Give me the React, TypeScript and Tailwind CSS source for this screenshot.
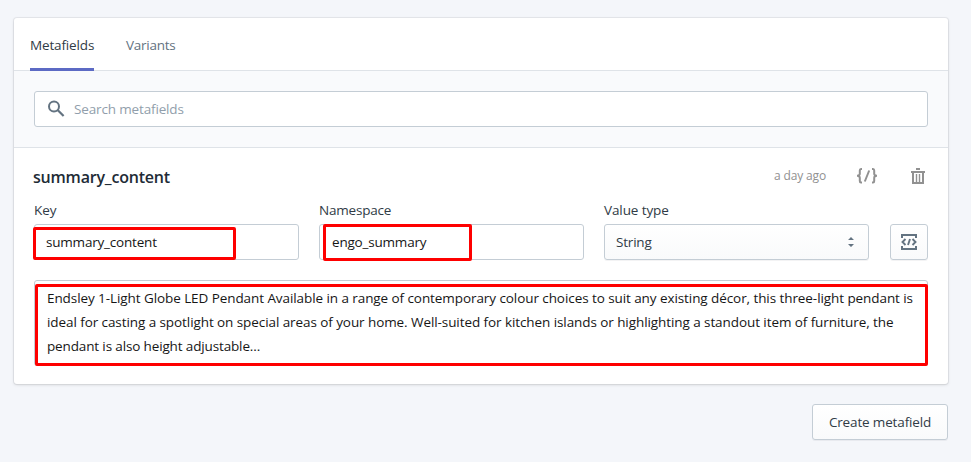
import React from "react";

const Mark = ({ className }: { className: string }) => (
  <div className={`pointer-events-none absolute rounded-[2px] border-[3px] border-[#fe0000] ${className}`} />
);

const inputBox = "h-9 rounded-[3px] border border-[#c4cdd5] bg-white";

export default function App() {
  return (
    <div className="h-[462px] w-[971px] overflow-hidden bg-[#f4f6fa] pl-[14px] pr-[23px] pt-[18px] font-['Open_Sans','Noto_Sans',sans-serif] text-[13.5px] leading-5 text-[#303b46]">
      <main className="h-[366px] rounded-[3px] bg-white shadow-[0_0_0_1px_rgba(63,63,68,0.07),0_1px_3px_0_rgba(63,63,68,0.17)]">
        <nav className="flex h-[53px] border-b border-[#dfe3e8] pl-4 leading-[54px]">
          <a className="h-[53px] w-16 whitespace-nowrap border-b-[3px] border-[#5c6ac4] tracking-[-0.15px]">Metafields</a>
          <a className="ml-8 whitespace-nowrap tracking-[-0.25px] text-[#637381]">Variants</a>
        </nav>
        <div className="h-[77px] border-b border-[#dfe3e8] bg-[#f9fafc] px-5 pt-5">
          <div className={`${inputBox} flex items-center pl-3`}>
            <svg className="h-5 w-5" viewBox="0 0 20 20" fill="none" stroke="#637381" strokeWidth="2">
              <circle cx="7" cy="7.4" r="5" />
              <path d="M10.6 11l6 6" strokeWidth="2.2" />
            </svg>
            <span className="ml-[7px] tracking-[-0.15px] text-[#919eab]">Search metafields</span>
          </div>
        </div>
        <section className="px-5">
          <header className="flex h-[56px] items-center">
            <h2 className="-ml-px flex-1 pt-px text-[16px] font-semibold tracking-[-0.2px] text-[#212b36]">summary_content</h2>
            <span className="mr-[30px] text-[12px] tracking-[-0.15px] text-[#919191]">a day ago</span>
            <svg className="mr-[33px] h-[18px] w-[22px]" viewBox="0 0 22 18" fill="none" stroke="#919191" strokeWidth="2">
              <path d="M6 2H5Q3.8 2 3.8 3.5V6.7Q3.8 8.8 1 8.8Q3.8 8.8 3.8 10.9V14.1Q3.8 15.6 5 15.6H6M16 2H17Q18.2 2 18.2 3.5V6.7Q18.2 8.8 21 8.8Q18.2 8.8 18.2 10.9V14.1Q18.2 15.6 17 15.6H16M13.2 3.5L8.8 14.5" />
            </svg>
            <svg className="mr-[3px] h-[18px] w-[14px]" viewBox="0 0 14 18" fill="none" stroke="#919191">
              <path d="M5 2H9" strokeWidth="2" />
              <path d="M0 5H14M2 5V16H12V5" strokeWidth="2" />
              <path d="M5.5 7V15M8.5 7V15" strokeWidth="1.4" />
            </svg>
          </header>
          <div className="relative flex gap-5">
            <label className="w-[265px]">
              <span className="mb-2 block leading-[12px]">Key</span>
              <div className={`${inputBox} pl-[11px] leading-[35px] text-[#161616]`}><span className="tracking-[-0.2px]">summary_content</span></div>
            </label>
            <label className="w-[265px]">
              <span className="mb-2 block leading-[12px] tracking-[-0.2px]">Namespace</span>
              <div className={`${inputBox} pl-3 leading-[35px] text-[#161616]`}><span className="tracking-[-0.2px]">engo_summary</span></div>
            </label>
            <label className="w-[265px]">
              <span className="mb-2 block leading-[12px] tracking-[-0.1px]">Value type</span>
              <div className="flex h-9 items-center justify-between rounded-[3px] border border-[#c4cdd5] bg-gradient-to-b from-white to-[#f9fafb] pl-[11px] pr-[14px] shadow-[0_1px_0_rgba(22,29,37,0.05)]">
                <span className="tracking-[-0.2px]">String</span>
                <svg className="h-[10px] w-[6px]" viewBox="0 0 6 10" fill="#637381"><path d="M0 3L3 0L6 3ZM0 7H6L3 10Z" /></svg>
              </div>
            </label>
            <button className="ml-px mt-5 flex h-9 w-[38px] items-center justify-center rounded-[3px] border border-[#c4cdd5] bg-gradient-to-b from-white to-[#f9fafb] shadow-[0_1px_0_rgba(22,29,37,0.05)]">
              <svg className="h-4 w-4" viewBox="0 0 16 16" fill="none" stroke="#637381">
                <path d="M1 4V1H15V4M1 12V15H15V12" strokeWidth="2" />
                <path d="M4.5 5L1.5 8L4.5 11M11.5 5L14.5 8L11.5 11M9 5L7 11" strokeWidth="1.9" />
              </svg>
            </button>
            <Mark className="left-[-1px] top-[23px] h-[33px] w-[203px]" />
            <Mark className="left-[289px] top-[20px] h-[37px] w-[149px]" />
          </div>
          <div className="relative mt-5 h-[86px] whitespace-nowrap rounded-[3px] border border-[#c4cdd5] pl-3 pt-[5px] leading-6 text-[#161616]">
            <div className="w-max tracking-[-0.078px]">Endsley 1-Light Globe LED Pendant Available in a range of contemporary colour choices to suit any existing décor, this three-light pendant is</div>
            <div className="w-max tracking-[-0.08px]">ideal for casting a spotlight on special areas of your home. Well-suited for kitchen islands or highlighting a standout item of furniture, the</div>
            <div className="w-max tracking-[-0.14px]">pendant is also height adjustable...</div>
            <Mark className="left-0 top-[3px] h-[82px] w-[893px]" />
          </div>
        </section>
      </main>
      <div className="mt-5 flex justify-end">
        <button className="h-9 w-[136px] whitespace-nowrap rounded-[3px] border border-[#c4cdd5] bg-gradient-to-b from-white to-[#f9fafb] tracking-[-0.15px] shadow-[0_1px_0_rgba(22,29,37,0.05)]">Create metafield</button>
      </div>
    </div>
  );
}
